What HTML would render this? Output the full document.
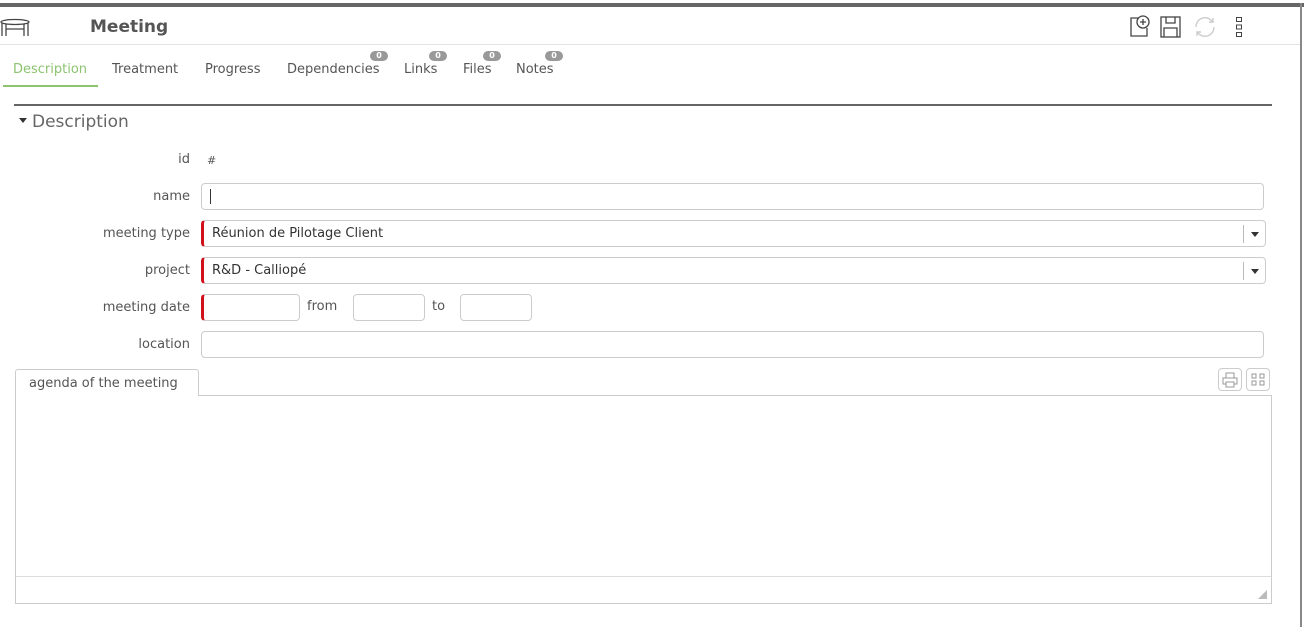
<!DOCTYPE html>
<html><head><style>
*{box-sizing:border-box}
body{margin:0;width:1304px;height:627px;background:#fff;font-family:"DejaVu Sans","Liberation Sans",sans-serif;font-size:13px;color:#555;position:relative;overflow:hidden}
.abs{position:absolute}
.topbar{left:0;top:3px;width:1304px;height:4px;background:#666}
.rline{left:1300px;top:3px;width:2px;height:624px;background:#888}
.hdrline{left:0;top:44px;width:1300px;height:1px;background:#e4e4e4}
.title{left:90px;top:17px;font-size:17px;font-weight:bold;color:#555}
.tab{top:62px;font-size:13px;color:#555}
.badge{top:51px;width:18px;height:10px;border-radius:5px;background:#999;color:#fff;font-size:8px;line-height:10px;text-align:center;font-weight:bold}
.lbl{width:190px;text-align:right;font-size:13px;color:#555;left:0}
.inp{left:201px;height:27px;border:1px solid #ccc;border-radius:4px;background:#fff}
.req{border-left:3px solid #d0101a}
.val{font-size:13px;color:#333;padding:5px 8px}
.dd{position:absolute;right:0;top:4px;width:22px;height:18px;border-left:1px solid #bbb}
.dd:after{content:"";position:absolute;left:7px;top:7px;border:4px solid transparent;border-top:5px solid #333}
</style></head><body>
<div class="abs topbar"></div>
<div class="abs rline"></div>
<svg class="abs" style="left:0;top:18px" width="32" height="20" viewBox="0 0 32 20"><ellipse cx="15" cy="4" rx="14" ry="2.5" fill="none" stroke="#444" stroke-width="1.3"/><path d="M2 5v13M6 6v12M24 6v12M28 5v13M6 11h18" stroke="#444" stroke-width="1.3" fill="none"/></svg>
<div class="abs title">Meeting</div>
<svg class="abs" style="left:1128px;top:14px" width="24" height="24" viewBox="0 0 24 24" fill="none" stroke="#444" stroke-width="1.3"><path d="M10 4H3v18h16v-8"/><circle cx="15" cy="8" r="6" fill="#fff"/><path d="M15 5v6M12 8h6"/></svg>
<svg class="abs" style="left:1159px;top:15px" width="24" height="24" viewBox="0 0 24 24" fill="none" stroke="#444" stroke-width="1.3"><rect x="2" y="2" width="19" height="20"/><path d="M7 2v6h9V2M5 22V13h13v9"/></svg>
<svg class="abs" style="left:1192px;top:15px" width="26" height="24" viewBox="0 0 26 24" fill="none" stroke="#ccc" stroke-width="1.4"><path d="M4 12a9 9 0 0 1 15-7l2 2M22 12a9 9 0 0 1-15 7l-2-2M21 3v4h-4M5 21v-4h4"/></svg>
<svg class="abs" style="left:1235px;top:16px" width="8" height="22" viewBox="0 0 8 22" fill="none" stroke="#444"><rect x="1.5" y="1.5" width="5" height="4"/><rect x="1.5" y="9" width="5" height="4"/><rect x="1.5" y="16.5" width="5" height="4"/></svg>
<div class="abs hdrline"></div>
<div class="abs tab" style="left:13px;color:#8cc46f">Description</div>
<div class="abs" style="left:3px;top:85px;width:95px;height:2px;background:#8cc46f"></div>
<div class="abs tab" style="left:112px">Treatment</div>
<div class="abs tab" style="left:205px">Progress</div>
<div class="abs tab" style="left:287px">Dependencies</div>
<div class="abs tab" style="left:404px">Links</div>
<div class="abs tab" style="left:463px">Files</div>
<div class="abs tab" style="left:516px">Notes</div>
<div class="abs badge" style="left:370px">0</div>
<div class="abs badge" style="left:429px">0</div>
<div class="abs badge" style="left:483px">0</div>
<div class="abs badge" style="left:545px">0</div>
<div class="abs" style="left:14px;top:104px;width:1258px;height:2px;background:#666"></div>
<div class="abs" style="left:19px;top:118px;border:4px solid transparent;border-top:5px solid #333"></div>
<div class="abs" style="left:32px;top:112px;font-size:17px;color:#666">Description</div>
<div class="abs lbl" style="top:152px">id</div>
<div class="abs" style="left:207px;top:154px;font-size:11px;color:#555">#</div>
<div class="abs lbl" style="top:189px">name</div>
<div class="abs inp" style="top:183px;width:1063px"><div class="abs" style="left:8px;top:5px;width:1px;height:15px;background:#333"></div></div>
<div class="abs lbl" style="top:226px">meeting type</div>
<div class="abs inp req val" style="top:220px;width:1065px">Réunion de Pilotage Client<div class="dd"></div></div>
<div class="abs lbl" style="top:263px">project</div>
<div class="abs inp req val" style="top:257px;width:1065px">R&amp;D - Calliopé<div class="dd"></div></div>
<div class="abs lbl" style="top:300px">meeting date</div>
<div class="abs inp req" style="top:294px;width:99px"></div>
<div class="abs" style="left:307px;top:299px">from</div>
<div class="abs inp" style="left:353px;top:294px;width:72px"></div>
<div class="abs" style="left:432px;top:299px">to</div>
<div class="abs inp" style="left:460px;top:294px;width:72px"></div>
<div class="abs lbl" style="top:337px">location</div>
<div class="abs inp" style="top:331px;width:1063px"></div>
<div class="abs" style="left:15px;top:369px;width:184px;height:27px;border:1px solid #ccc;border-bottom:none;border-radius:3px 3px 0 0;background:#fff;z-index:2;padding:6px 13px;font-size:13px">agenda of the meeting</div>
<div class="abs" style="left:1218px;top:368px;width:24px;height:23px;border:1px solid #ccc;border-radius:4px"><svg width="22" height="21" viewBox="0 0 22 21" fill="none" stroke="#999"><rect x="7" y="4" width="8" height="5"/><rect x="4" y="9" width="14" height="6"/><rect x="7" y="13" width="8" height="5" fill="#fff"/></svg></div>
<div class="abs" style="left:1246px;top:368px;width:24px;height:23px;border:1px solid #ccc;border-radius:4px"><svg width="22" height="21" viewBox="0 0 22 21" fill="none" stroke="#999"><rect x="5" y="5" width="4" height="4"/><rect x="13" y="5" width="4" height="4"/><rect x="5" y="12" width="4" height="4"/><rect x="13" y="12" width="4" height="4"/></svg></div>
<div class="abs" style="left:15px;top:395px;width:1257px;height:209px;border:1px solid #ccc"></div>
<div class="abs" style="left:16px;top:576px;width:1255px;height:1px;background:#ddd"></div>
<div class="abs" style="left:1258px;top:590px;border-left:9px solid transparent;border-bottom:9px solid #bbb"></div>
</body></html>
